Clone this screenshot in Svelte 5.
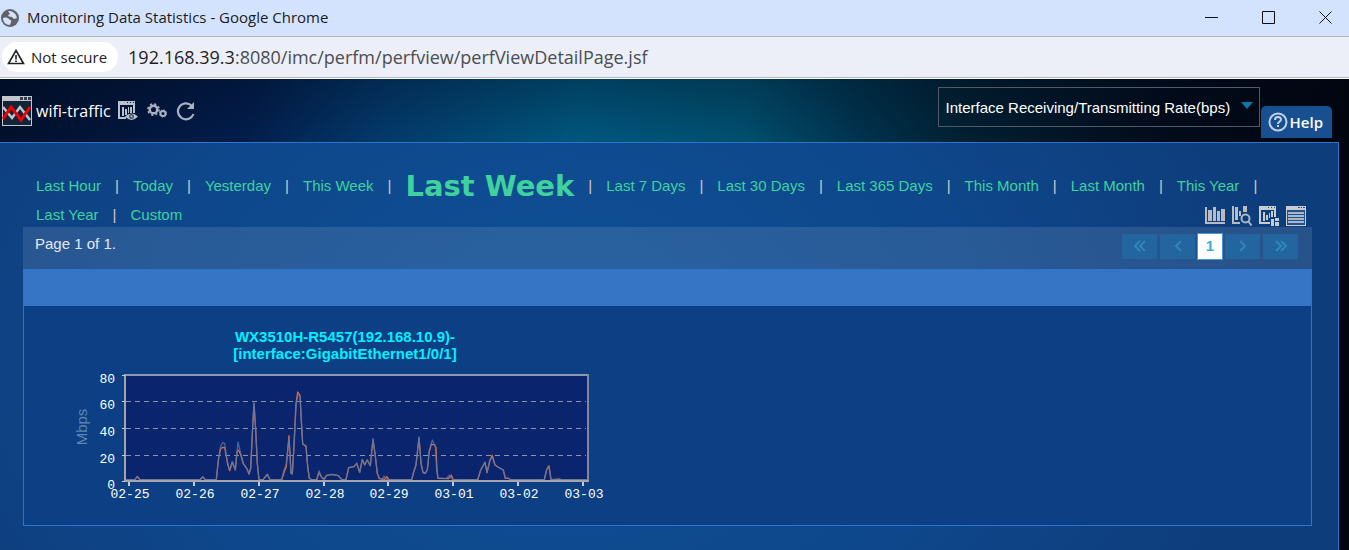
<script lang="ts">
	const ranges = [
		"Last Hour",
		"Today",
		"Yesterday",
		"This Week",
		"Last Week",
		"Last 7 Days",
		"Last 30 Days",
		"Last 365 Days",
		"This Month",
		"Last Month",
		"This Year",
		"Last Year",
		"Custom",
	];
	const metrics = ["Interface Receiving/Transmitting Rate(bps)"];

	let selected = $state("Last Week");
	let metric = $state(metrics[0]);

	const days = ["02-25", "02-26", "02-27", "02-28", "02-29", "03-01", "03-02", "03-03"];
	const dayX = (i: number) => 69 + Math.round((i * 454) / 7);
	const levels = [
		{ label: "80", y: 15 },
		{ label: "60", y: 41 },
		{ label: "40", y: 68 },
		{ label: "20", y: 95 },
		{ label: "0", y: 121 },
	];

	// samples are [x, y] in thirds of a chart unit
	type Sample = [number, number];

	const transmit: Sample[] = [
		[195, 359], [225, 359], [232, 349], [240, 359], [420, 359], [428, 350], [436, 359], [469, 359],
		[476, 290], [482, 258], [488, 248], [494, 250], [498, 280], [503, 310], [509, 330], [517, 305],
		[526, 329], [534, 246], [542, 280], [550, 310], [560, 325], [567, 342], [572, 325], [577, 220],
		[582, 125], [587, 210], [592, 310], [597, 359], [610, 358], [622, 343], [630, 359], [665, 359],
		[672, 330], [678, 315], [687, 235], [693, 340], [697, 342], [702, 260], [708, 140], [713, 106],
		[720, 108], [724, 180], [728, 252], [738, 260], [743, 320], [748, 355], [755, 359], [770, 359],
		[777, 332], [785, 353], [793, 359], [800, 346], [815, 343], [835, 347], [845, 359], [858, 359],
		[866, 323], [882, 320], [890, 310], [899, 337], [907, 298], [914, 314], [922, 300], [931, 317],
		[939, 235], [945, 280], [952, 340], [958, 355], [968, 357], [972, 348], [980, 359], [1055, 359],
		[1060, 340], [1068, 315], [1077, 230], [1083, 310], [1089, 337], [1095, 340], [1102, 330],
		[1108, 270], [1117, 240], [1126, 258], [1130, 330], [1134, 354], [1160, 355], [1168, 346],
		[1178, 359], [1253, 359], [1262, 330], [1275, 307], [1281, 338], [1290, 300], [1297, 292],
		[1305, 315], [1315, 322], [1330, 330], [1336, 354], [1345, 354], [1352, 359], [1453, 359],
		[1460, 330], [1467, 320], [1473, 359], [1498, 356], [1504, 359], [1583, 359],
	];
	const receive: Sample[] = [
		[195, 359], [225, 359], [232, 350], [240, 359], [420, 359], [428, 351], [436, 359], [469, 359],
		[476, 292], [482, 266], [488, 262], [494, 263], [498, 284], [503, 313], [509, 332], [517, 306],
		[526, 330], [531, 275], [536, 271], [542, 284], [550, 311], [560, 325], [567, 342], [572, 325],
		[577, 224], [582, 132], [587, 210], [592, 310], [597, 359], [610, 358], [622, 343], [630, 359],
		[665, 359], [673, 335], [679, 320], [687, 227], [693, 338], [697, 342], [702, 255], [708, 130],
		[713, 96], [720, 106], [724, 180], [728, 252], [738, 258], [743, 320], [748, 355], [755, 359],
		[770, 359], [777, 338], [787, 354], [793, 356], [800, 346], [815, 343], [835, 347], [845, 359],
		[858, 359], [866, 323], [882, 320], [890, 310], [899, 337], [907, 299], [914, 314], [922, 300],
		[931, 317], [939, 240], [945, 280], [952, 340], [958, 356], [974, 358], [980, 350], [987, 359],
		[1055, 359], [1060, 340], [1068, 315], [1077, 234], [1083, 310], [1089, 337], [1095, 340],
		[1102, 330], [1108, 275], [1114, 253], [1123, 254], [1128, 262], [1131, 330], [1134, 355],
		[1165, 356], [1174, 346], [1180, 359], [1253, 359], [1262, 330], [1275, 307], [1281, 338],
		[1290, 300], [1297, 286], [1305, 315], [1315, 322], [1330, 330], [1336, 355], [1345, 355],
		[1352, 359], [1453, 359], [1460, 328], [1467, 317], [1473, 359], [1583, 359],
	];

	const toPoints = (samples: Sample[]) =>
		samples.map(([x, y]) => `${(x / 3).toFixed(1)},${(y / 3).toFixed(1)}`).join(" ");
</script>

<div class="window">
	<header class="title-bar">
		<svg class="globe" viewBox="0 0 18 18" aria-hidden="true">
			<circle cx="9" cy="9" r="9" fill="#5f6368" />
			<path d="M2 9c2-1 5-.5 6 1s3 1 2 3l-1 3C4.500 16 2 13 2 9zM7 2c3-.500 6 1 8 4l1 3-3 1-2-2-3-.500L7 6l2-1z" fill="#d3e3fd" />
		</svg>
		<span class="title">Monitoring Data Statistics - Google Chrome</span>
		<div class="controls">
			<button type="button" aria-label="Minimize">
				<svg viewBox="0 0 14 14"><path d="M0 6.500h13" /></svg>
			</button>
			<button type="button" aria-label="Maximize">
				<svg viewBox="0 0 14 14"><path d="M.5.5h12v12H.5z" /></svg>
			</button>
			<button type="button" aria-label="Close">
				<svg viewBox="0 0 14 14"><path d="M.5.5l12 12M12.500.5l-12 12" /></svg>
			</button>
		</div>
	</header>

	<div class="address-bar">
		<button class="security" type="button">
			<svg viewBox="0 0 18 16" aria-hidden="true">
				<path d="M9 1.500L16.500 14.500H1.500z" fill="none" stroke="#202124" stroke-width="1.600" />
				<path d="M9 6v4.500M9 11.500v1.500" stroke="#202124" stroke-width="1.600" />
			</svg>
			Not secure
		</button>
		<span class="url">192.168.39.3<span class="path">:8080/imc/perfm/perfview/perfViewDetailPage.jsf</span></span>
	</div>

	<main class="page">
		<div class="toolbar">
			<svg class="logo" viewBox="0 0 30 30" aria-hidden="true">
				<path d="M0 0h30v30H0z" fill="#c3c7cc" />
				<path d="M18 1h3v3h-3zM22 1h3v3h-3zM26 1h3v3h-3z" fill="#333c4c" />
				<path d="M1 5h28v24H1z" fill="#132338" />
				<path d="M1 11l9 11 8-11 10 13" fill="none" stroke="#c3c7cc" stroke-width="2.500" />
				<path d="M1 23l8-12 10 13 9-13" fill="none" stroke="#f00000" stroke-width="3" />
			</svg>
			<h1>wifi-traffic</h1>
			<button class="tool" type="button" aria-label="View">
				<svg viewBox="0 0 20 20">
					<path d="M0 0h17v4H0z" fill="#b9c1cd" />
					<path d="M9 1h1v1H9zM12 1h1v1h-1zM15 1h1v1h-1z" fill="#0b1c3c" />
					<path d="M1 3v14h7M16 3v9" fill="none" stroke="#b9c1cd" stroke-width="2" />
					<path d="M4 6h2v9H4zM7 8h2v6H7zM10 6h1v6h-1zM12 6h2v6h-2z" fill="#b9c1cd" />
					<path d="M7 15.500q6.500-6 13 0-6.500 7-13 0z" fill="#b9c1cd" />
					<circle cx="13.500" cy="15.500" r="2.500" fill="#47536a" />
					<circle cx="13.500" cy="15.500" r="1" fill="#b9c1cd" />
				</svg>
			</button>
			<button class="tool" type="button" aria-label="Settings">
				<svg viewBox="0 0 20 20" fill="none" stroke="#a9b1bf">
					<circle cx="6.500" cy="8.500" r="3.800" stroke-width="2.500" />
					<circle cx="6.500" cy="8.500" r="5.600" stroke-width="1.600" stroke-dasharray="2.200" />
					<circle cx="16" cy="12.500" r="2.500" stroke-width="2" />
					<circle cx="16" cy="12.500" r="3.600" stroke-width="1" stroke-dasharray="1.410" />
				</svg>
			</button>
			<button class="tool" type="button" aria-label="Refresh">
				<svg viewBox="0 0 20 20">
					<path d="M15.500 4.500A8 8 0 1 0 17.500 13" fill="none" stroke="#a9b1bf" stroke-width="2.200" />
					<path d="M18 1v7h-7z" fill="#a9b1bf" />
				</svg>
			</button>
			<div class="right">
				<div class="metric">
					<select aria-label="Metric" bind:value={metric}>
						{#each metrics as name}
							<option>{name}</option>
						{/each}
					</select>
					<svg class="caret" viewBox="0 0 12 7" aria-hidden="true"><path d="M0 0h12L6 7z" /></svg>
				</div>
				<a class="help" href="#help">
					<svg viewBox="0 0 20 20" aria-hidden="true">
						<circle cx="10" cy="10" r="8.500" fill="none" stroke="#c4d1e3" stroke-width="2" />
						<path d="M7 8q0-3 3-3t3 2.500c0 2-3 2-3 4.500M10 13v2" fill="none" stroke="#c4d1e3" stroke-width="2" />
					</svg>
					Help
				</a>
			</div>
		</div>

		<section class="panel">
			<div class="filters">
				<nav>
					{#each ranges as range, i}
						<span class="item">
							<a href="#range" class:active={range === selected} onclick={() => (selected = range)}>{range}</a>
							{#if i < ranges.length - 1}<span class="bar">|</span>{/if}
						</span>
					{/each}
				</nav>
				<div class="views">
					<button type="button" aria-label="Bar chart">
						<svg viewBox="0 0 20 20">
							<path d="M1 1v16h19" fill="none" stroke="#b9bbbf" stroke-width="2" />
							<path d="M3 4h4v11H3zM8 1h3v14H8zM12 5h3v10h-3zM16 3h4v12h-4z" fill="#b9bbbf" />
						</svg>
					</button>
					<button type="button" aria-label="Inspect chart">
						<svg viewBox="0 0 20 20">
							<path d="M1 0v17h7" fill="none" stroke="#b9bbbf" stroke-width="2" />
							<path d="M3 1h3v13H3zM7 5h2v5H7zM11 0h4v6h-4z" fill="#b9bbbf" />
							<circle cx="13.500" cy="12.500" r="4" fill="none" stroke="#a9b6c8" stroke-width="2" />
							<path d="M16.500 15.500l3 4" stroke="#a9b6c8" stroke-width="2" />
						</svg>
					</button>
					<button type="button" aria-label="Chart layout">
						<svg viewBox="0 0 20 20">
							<path d="M0 0h17v4H0z" fill="#c8cbd0" />
							<path d="M9 1h1v1H9zM12 1h1v1h-1zM15 1h1v1h-1z" fill="#305080" />
							<path d="M1 3v14h10M16 3v8" fill="none" stroke="#c8cbd0" stroke-width="2" />
							<path d="M4 6h2v9H4zM7 9h2v5H7zM10 7h1v5h-1zM12 5h2v6h-2zM12 13h3v7h-3zM16 12h4v3h-4zM16 16h4v4h-4z" fill="#c8cbd0" />
						</svg>
					</button>
					<button type="button" aria-label="Table">
						<svg viewBox="0 0 20 20">
							<path d="M0 0h20v20H0z" fill="#c8cbd0" />
							<path d="M12 1h2v1h-2zM15 1h1v1h-1zM17 1h2v1h-2zM1 4h18v15H1z" fill="#25518c" />
							<path d="M2 6h16v2H2zM2 9h16v2H2zM2 12h16v2H2zM2 15h16v2H2z" fill="#a9b6c8" />
						</svg>
					</button>
				</div>
			</div>

			<div class="pager">
				<span>Page 1 of 1.</span>
				<div class="pages">
					<button type="button" disabled aria-label="First page">
						<svg viewBox="0 0 12 12"><path d="M6 1L1 6l5 5M11 1L6 6l5 5" /></svg>
					</button>
					<button type="button" disabled aria-label="Previous page">
						<svg viewBox="0 0 12 12"><path d="M9 1L4 6l5 5" /></svg>
					</button>
					<button class="current" type="button">1</button>
					<button type="button" disabled aria-label="Next page">
						<svg viewBox="0 0 12 12"><path d="M3 1l5 5-5 5" /></svg>
					</button>
					<button type="button" disabled aria-label="Last page">
						<svg viewBox="0 0 12 12"><path d="M1 1l5 5-5 5M6 1l5 5-5 5" /></svg>
					</button>
				</div>
			</div>

			<div class="box">
				<div class="box-head"></div>
				<figure>
					<figcaption>WX3510H-R5457(192.168.10.9)-<br />[interface:GigabitEthernet1/0/1]</figcaption>
					<svg class="chart" viewBox="0 2 560 143" role="img" aria-label="Traffic in Mbps by day">
						<rect x="65" y="15" width="463" height="106" fill="#0a246e" />
						{#each levels.slice(1, 4) as level}
							<path class="grid" d="M66 {level.y + 0.5}H526" />
						{/each}
						<path d="M64 15h465" stroke="#8f98a8" stroke-width="2" />
						<path d="M528 14v108" stroke="#7f889b" stroke-width="2" />
						<polyline points={toPoints(receive)} stroke="#f26a2a" />
						<polyline points={toPoints(transmit)} stroke="#4b7bb5" stroke-opacity="0.800" />
						<path d="M65 14v108" stroke="#a5a5a9" stroke-width="2" />
						<path d="M64 121h465" stroke="#aaa4ae" stroke-width="2" />
						{#each levels as level}
							<path d="M62 {level.y + 0.5}h3" stroke="#c8ccd4" />
							<text x="55" y={level.y + 8} text-anchor="end">{level.label}</text>
						{/each}
						{#each days as day, i}
							<path d="M{dayX(i)} 122v4" stroke="#c8ccd4" stroke-width="2" />
							<text x={dayX(i) + 1} y="138" text-anchor="middle">{day}</text>
						{/each}
						<text class="unit" x="0" y="0" text-anchor="middle" transform="translate(27 67) rotate(-90)">Mbps</text>
					</svg>
				</figure>
			</div>
		</section>
	</main>
</div>

<style>
	:global(body) {
		margin: 0;
	}

	.window {
		display: flex;
		flex-direction: column;
		min-height: 100vh;
		font-family: "Liberation Sans", Arial, sans-serif;
		font-size: 15px;
	}

	button {
		display: inline-flex;
		align-items: center;
		justify-content: center;
		padding: 0;
		border: none;
		background: none;
		font: inherit;
	}

	a {
		text-decoration: none;
	}

	.title-bar {
		display: flex;
		align-items: center;
		height: 36px;
		border-bottom: 1px solid #b4b4b4;
		background: #d3e3fd;
		color: #1b1b1b;
		font-family: "Open Sans", sans-serif;
	}

	.globe {
		width: 18px;
		height: 18px;
		margin: 0 8px 0 1px;
	}

	.title {
		line-height: 20px;
		padding-bottom: 2px;
	}

	.controls {
		display: flex;
		gap: 11px;
		margin-left: auto;
	}

	.controls button {
		width: 46px;
		height: 36px;
	}

	.controls svg {
		width: 14px;
		height: 14px;
		fill: none;
		stroke: #111;
	}

	.address-bar {
		display: flex;
		align-items: center;
		gap: 10px;
		height: 40px;
		padding-left: 2px;
		border-bottom: 1px solid #b8b8bc;
		background: #eceff7;
		font-family: "Open Sans", sans-serif;
	}

	.security {
		gap: 6px;
		height: 30px;
		padding: 0 11px 0 5px;
		border-radius: 15px;
		background: #fff;
		color: #202124;
		font-size: 15px;
	}

	.security svg {
		width: 18px;
		height: 16px;
	}

	.url {
		color: #1f1f1f;
		font-size: 18px;
	}

	.path {
		color: #4a4d52;
	}

	.page {
		flex: 1;
		display: flex;
		flex-direction: column;
		padding-right: 10px;
		border-top: 1px solid #fff;
		background: linear-gradient(
			94deg,
			#01102c 0%,
			#021d4c 18%,
			#033a6c 28%,
			#00577f 42%,
			#005070 54%,
			#003550 62%,
			#012033 70%,
			#020c1c 84%,
			#01040c 100%
		);
	}

	.toolbar {
		display: flex;
		align-items: center;
		height: 63px;
		padding: 0 7px 0 2px;
		background: linear-gradient(rgba(0, 8, 24, 0.3), transparent);
		color: #fff;
		font-family: "Open Sans", sans-serif;
	}

	.logo {
		width: 30px;
		height: 30px;
	}

	h1 {
		margin: 0 7px 0 4px;
		font-size: 16px;
		font-weight: 400;
	}

	.tool {
		margin-right: 9px;
	}

	.tool svg,
	.help svg {
		width: 20px;
		height: 20px;
	}

	.right {
		display: flex;
		align-items: flex-end;
		gap: 1px;
		align-self: flex-start;
		height: 59px;
		margin-left: auto;
	}

	.metric {
		position: relative;
		align-self: flex-start;
		margin-top: 8px;
	}

	select {
		width: 322px;
		height: 40px;
		padding: 0 24px 0 7px;
		border: 1px solid #515b67;
		background: transparent;
		color: #fff;
		font-family: "Liberation Sans", Arial, sans-serif;
		font-size: 15px;
		appearance: none;
	}

	.caret {
		position: absolute;
		top: 15px;
		right: 7px;
		width: 12px;
		height: 7px;
		fill: #0878a8;
		pointer-events: none;
	}

	.help {
		display: flex;
		align-items: center;
		gap: 2px;
		height: 32px;
		padding: 0 9px 0 7px;
		border-radius: 5px 5px 0 0;
		background: #174f91;
		color: #fff;
		font-weight: 600;
	}

	.panel {
		flex: 1;
		padding: 28px 26px 24px 23px;
		border: solid #2c74cf;
		border-width: 1px 1px 0 0;
		background: radial-gradient(ellipse 700px 520px at 42% 50%, #0f5096, #0e478b 60%, #0e3d7c 100%);
	}

	.filters {
		display: flex;
		align-items: flex-end;
		justify-content: space-between;
	}

	nav {
		display: flex;
		flex: 1;
		flex-wrap: wrap;
		align-items: center;
		margin-left: 13px;
	}

	.item {
		display: flex;
		align-items: center;
		height: 29px;
		white-space: nowrap;
	}

	.item a {
		color: #3fd29f;
	}

	.item .active {
		font-family: "DejaVu Sans", sans-serif;
		font-size: 29px;
		font-weight: 700;
	}

	.bar {
		margin: 0 14px;
		color: #d8c8c4;
	}

	.views {
		display: flex;
		gap: 7px;
		width: 101px;
		margin: 0 6px 3px -107px;
	}

	.views svg {
		display: block;
		width: 20px;
		height: 20px;
	}

	.pager {
		display: flex;
		justify-content: space-between;
		height: 42px;
		margin-top: -2px;
		padding: 0 14px 0 12px;
		background: rgba(255, 255, 255, 0.11);
		color: #e4e8ee;
		line-height: 34px;
	}

	.pages {
		display: flex;
		align-items: center;
		gap: 3px;
		height: 38px;
	}

	.pages button {
		width: 35px;
		height: 25px;
		background: #22659f;
	}

	.pages .current {
		width: 26px;
		height: 27px;
		margin: 0 -1px;
		border: 1px solid #4a95d8;
		background: #fff;
		color: #35aee2;
		font-weight: 700;
	}

	.pages svg {
		width: 12px;
		height: 12px;
		fill: none;
		stroke: #3185b9;
		stroke-width: 2;
	}

	.box {
		border: 1px solid #2c74cf;
		background: #0c3f84;
	}

	.box-head {
		height: 36px;
		background: #3674c5;
	}

	figure {
		width: 560px;
		height: 219px;
		margin: 0 0 0 36px;
	}

	figcaption {
		padding: 22px 0 0 10px;
		width: 550px;
		color: #00f0ff;
		font-weight: 700;
		line-height: 17px;
		text-align: center;
	}

	.chart {
		display: block;
		width: 560px;
		height: 143px;
	}

	.chart text {
		fill: #fff;
		font-family: "Liberation Mono", monospace;
		font-size: 13px;
	}

	.chart .unit {
		fill: #5f86b4;
		font-family: "Liberation Sans", Arial, sans-serif;
		font-size: 15px;
	}

	polyline {
		fill: none;
		stroke-width: 1.3;
		stroke-linejoin: round;
	}

	.grid {
		stroke: #8b93a6;
		stroke-dasharray: 5 4;
	}
</style>
